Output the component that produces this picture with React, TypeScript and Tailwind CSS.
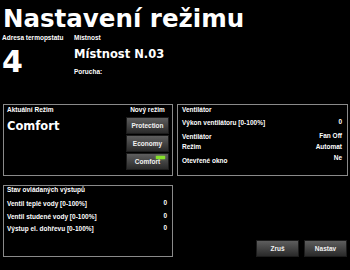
import React from "react";

const SMALL = { fontFamily: '"Liberation Sans", Arial, sans-serif' };
const BIG = { fontFamily: '"DejaVu Sans", Verdana, sans-serif' };

function Btn({ children, active }: { children: React.ReactNode; active?: boolean }) {
  return (
    <div className="relative h-[17px] w-[43px] flex items-center justify-center bg-gradient-to-b from-[#5e5e5e] via-[#444444] to-[#2a2a2a] border border-[#1c1c1c] text-[6.5px] leading-[8px] font-bold text-[#f2f2f2]">
      {children}
      {active && (
        <span className="absolute right-[3px] top-[2px] w-[9px] h-[3px] bg-[#86e12a] shadow-[0_0_2px_#9cff3c]" />
      )}
    </div>
  );
}

function Row({
  label,
  value,
  h,
  labelMt = 0,
  valueMt = 0,
}: {
  label: string;
  value: string;
  h: string;
  labelMt?: number;
  valueMt?: number;
}) {
  return (
    <div className={`flex justify-between items-start ${h}`}>
      <span style={{ marginTop: labelMt }}>{label}</span>
      <span style={{ marginTop: valueMt }}>{value}</span>
    </div>
  );
}

export default function App() {
  return (
    <div className="w-[350px] h-[270px] bg-black text-white overflow-hidden">
      <h1
        className="pl-[3px] pt-[6px] h-[31px] text-[24.5px] leading-[25px] font-bold"
        style={BIG}
      >
        Nastavení režimu
      </h1>
      <div className="flex h-[70px] mt-[3px] text-[6.5px] leading-[8px] font-bold" style={SMALL}>
        <div className="w-[74px] pl-[2px]">
          <div>Adresa termopstatu</div>
          <div className="mt-[4.5px] text-[30px] leading-[30px] font-bold" style={BIG}>
            4
          </div>
        </div>
        <div>
          <div>Místnost</div>
          <div className="mt-[5.5px] text-[11.5px] leading-[12px] font-bold" style={BIG}>
            Místnost N.03
          </div>
          <div className="mt-[8px]">Porucha:</div>
        </div>
      </div>

      <div className="flex gap-x-[4px] pl-[3px] text-[6.5px] leading-[8px] font-bold" style={SMALL}>
        <div className="w-[170px] h-[72px] border border-[#8a8a8a] flex justify-between pl-[3px] pr-[3px]">
          <div className="pt-[1px]">
            <div>Aktuální Režim</div>
            <div className="mt-[6px] text-[11.5px] leading-[12px]" style={BIG}>
              Comfort
            </div>
          </div>
          <div className="pt-[1px] flex flex-col items-center">
            <div>Nový režim</div>
            <div className="mt-[3px] flex flex-col gap-[1px]">
              <Btn>Protection</Btn>
              <Btn>Economy</Btn>
              <Btn active>Comfort</Btn>
            </div>
          </div>
        </div>
        <div className="w-[171px] h-[72px] border border-[#8a8a8a] pl-[4px] pr-[5px] pt-[1px]">
          <div>Ventilátor</div>
          <div className="mt-[4px]">
            <Row label="Výkon ventilátoru [0-100%]" value="0" h="h-[14px]" labelMt={1} />
            <Row label="Ventilátor" value="Fan Off" h="h-[11px]" labelMt={1} />
            <Row label="Režim" value="Automat" h="h-[11px]" />
            <Row label="Otevřené okno" value="Ne" h="h-[11px]" labelMt={3} />
          </div>
        </div>
      </div>

      <div className="flex items-end pl-[3px] mt-[9px] text-[6.5px] leading-[8px] font-bold" style={SMALL}>
        <div className="w-[170px] h-[72px] border border-[#8a8a8a] pl-[3px] pr-[5px]">
          <div>Stav ovládaných výstupů</div>
          <div className="mt-[5px]">
            <Row label="Ventil teplé vody [0-100%]" value="0" h="h-[13px]" labelMt={1} />
            <Row label="Ventil studené vody [0-100%]" value="0" h="h-[12px]" labelMt={1} />
            <Row label="Výstup el. dohřevu [0-100%]" value="0" h="h-[12px]" labelMt={1} />
          </div>
        </div>
        <div className="ml-auto mr-[3px] flex gap-[5px]">
          <div className="h-[17px] w-[43px] flex items-center justify-center bg-gradient-to-b from-[#5e5e5e] via-[#444444] to-[#2a2a2a] border border-[#1c1c1c] text-[#f2f2f2]">
            Zruš
          </div>
          <div className="h-[17px] w-[43px] flex items-center justify-center bg-gradient-to-b from-[#5e5e5e] via-[#444444] to-[#2a2a2a] border border-[#1c1c1c] text-[#f2f2f2]">
            Nastav
          </div>
        </div>
      </div>
    </div>
  );
}
